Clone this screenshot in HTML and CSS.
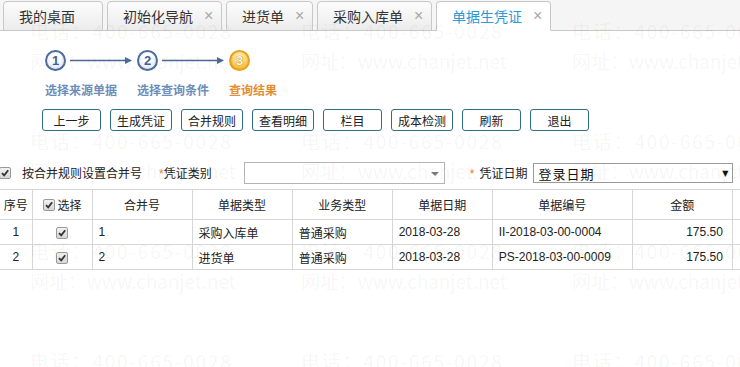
FILE: index.html
```html
<!DOCTYPE html>
<html lang="zh-CN">
<head>
<meta charset="utf-8">
<title>单据生凭证</title>
<link rel="stylesheet" href="styles.css">
</head>
<body>
<div class="page">
  <div class="tabbar">
    <div class="tab tab-home"><span class="tab-label">我的桌面</span></div>
    <div class="tab"><span class="tab-label">初始化导航</span><span class="tab-close">×</span></div>
    <div class="tab"><span class="tab-label">进货单</span><span class="tab-close">×</span></div>
    <div class="tab"><span class="tab-label">采购入库单</span><span class="tab-close">×</span></div>
    <div class="tab active"><span class="tab-label">单据生凭证</span><span class="tab-close">×</span></div>
  </div>

  <div class="steps">
    <div class="step-row">
      <div class="step">
        <span class="circle">1</span>
        <svg class="arrow" width="62" height="9" viewBox="0 0 62 9"><line x1="0" y1="4.5" x2="56" y2="4.5" stroke="#4c6a99" stroke-width="1.3"/><polygon points="55,1 62,4.5 55,8" fill="#4c6a99"/></svg>
      </div>
      <div class="step">
        <span class="circle">2</span>
        <svg class="arrow" width="62" height="9" viewBox="0 0 62 9"><line x1="0" y1="4.5" x2="56" y2="4.5" stroke="#4c6a99" stroke-width="1.3"/><polygon points="55,1 62,4.5 55,8" fill="#4c6a99"/></svg>
      </div>
      <div class="step">
        <span class="circle current">3</span>
      </div>
    </div>
    <div class="step-labels">
      <span class="step-label">选择来源单据</span>
      <span class="step-label">选择查询条件</span>
      <span class="step-label current">查询结果</span>
    </div>
  </div>

  <div class="toolbar">
    <button class="btn">上一步</button>
    <button class="btn btn-wide">生成凭证</button>
    <button class="btn btn-wide">合并规则</button>
    <button class="btn btn-wide">查看明细</button>
    <button class="btn">栏目</button>
    <button class="btn btn-wide">成本检测</button>
    <button class="btn">刷新</button>
    <button class="btn">退出</button>
  </div>

  <div class="filter">
    <span class="chk chk-edge"><svg viewBox="0 0 10 10" width="10" height="10"><path d="M2 5.2 L4.2 7.4 L8.2 2.2" fill="none" stroke="#333" stroke-width="1.8"/></svg></span>
    <span class="filter-text merge-label">按合并规则设置合并号</span>
    <span class="filter-text type-label"><span class="req">*</span>凭证类别</span>
    <span class="select select-type"><span class="select-caret"></span></span>
    <span class="filter-text date-label"><span class="req req-gap">*</span>凭证日期</span>
    <span class="select select-date"><span class="select-value">登录日期</span><span class="select-arrow">▼</span></span>
  </div>

  <table class="grid">
    <colgroup>
      <col class="c-no"><col class="c-sel"><col class="c-w100"><col class="c-w100"><col class="c-w100"><col class="c-w100"><col class="c-w140"><col class="c-w100"><col class="c-w100">
    </colgroup>
    <thead>
      <tr>
        <th>序号</th>
        <th><span class="th-sel"><span class="chk"><svg viewBox="0 0 10 10" width="10" height="10"><path d="M2 5.2 L4.2 7.4 L8.2 2.2" fill="none" stroke="#333" stroke-width="1.8"/></svg></span>选择</span></th>
        <th>合并号</th>
        <th>单据类型</th>
        <th>业务类型</th>
        <th>单据日期</th>
        <th>单据编号</th>
        <th>金额</th>
        <th></th>
      </tr>
    </thead>
    <tbody>
      <tr>
        <td class="center">1</td>
        <td class="center"><span class="chk"><svg viewBox="0 0 10 10" width="10" height="10"><path d="M2 5.2 L4.2 7.4 L8.2 2.2" fill="none" stroke="#333" stroke-width="1.8"/></svg></span></td>
        <td>1</td>
        <td>采购入库单</td>
        <td>普通采购</td>
        <td>2018-03-28</td>
        <td>II-2018-03-00-0004</td>
        <td class="num">175.50</td>
        <td></td>
      </tr>
      <tr>
        <td class="center">2</td>
        <td class="center"><span class="chk"><svg viewBox="0 0 10 10" width="10" height="10"><path d="M2 5.2 L4.2 7.4 L8.2 2.2" fill="none" stroke="#333" stroke-width="1.8"/></svg></span></td>
        <td>2</td>
        <td>进货单</td>
        <td>普通采购</td>
        <td>2018-03-28</td>
        <td>PS-2018-03-00-0009</td>
        <td class="num">175.50</td>
        <td></td>
      </tr>
    </tbody>
  </table>

  <div class="watermark" aria-hidden="true">
    <div class="wm"><span>电话：400-665-0028</span><span class="web">网址：www.chanjet.net</span></div>
    <div class="wm"><span>电话：400-665-0028</span><span class="web">网址：www.chanjet.net</span></div>
    <div class="wm"><span>电话：400-665-0028</span><span class="web">网址：www.chanjet.net</span></div>
    <div class="wm"><span>电话：400-665-0028</span><span class="web">网址：www.chanjet.net</span></div>
    <div class="wm"><span>电话：400-665-0028</span><span class="web">网址：www.chanjet.net</span></div>
    <div class="wm"><span>电话：400-665-0028</span><span class="web">网址：www.chanjet.net</span></div>
    <div class="wm"><span>电话：400-665-0028</span><span class="web">网址：www.chanjet.net</span></div>
    <div class="wm"><span>电话：400-665-0028</span><span class="web">网址：www.chanjet.net</span></div>
    <div class="wm"><span>电话：400-665-0028</span><span class="web">网址：www.chanjet.net</span></div>
    <div class="wm"><span>电话：400-665-0028</span><span class="web">网址：www.chanjet.net</span></div>
    <div class="wm"><span>电话：400-665-0028</span><span class="web">网址：www.chanjet.net</span></div>
    <div class="wm"><span>电话：400-665-0028</span><span class="web">网址：www.chanjet.net</span></div>
  </div>
</div>
</body>
</html>
```

FILE: styles.css
```css
html, body {
  margin: 0;
  padding: 0;
  background: #fff;
}

body {
  font-family: "Liberation Sans", "Noto Sans CJK SC", sans-serif;
  font-size: 12px;
  color: #222;
  overflow: hidden;
}

.page {
  position: relative;
  width: 740px;
  height: 367px;
  overflow: hidden;
}

/* ---------- tabs ---------- */
.tabbar {
  display: flex;
  align-items: flex-end;
  gap: 4px;
  height: 30px;
  padding-left: 3px;
  background: #f5f5f5;
  border-bottom: 1px solid #c8c8c8;
}

.tab {
  display: flex;
  align-items: center;
  box-sizing: border-box;
  height: 30px;
  margin-bottom: -1px;
  padding: 0 8px 0 15px;
  border: 1px solid #c8c8c8;
  border-radius: 4px 4px 0 0;
  background: linear-gradient(#fcfcfc, #ececec);
  font-family: "Noto Sans CJK SC", sans-serif;
  font-size: 14px;
  color: #333;
}

.tab-home {
  min-width: 100px;
}

.tab-label {
  line-height: 18px;
}

.tab-close {
  margin-left: 11px;
  width: 9px;
  font-family: "Liberation Sans", sans-serif;
  font-size: 16px;
  color: #a8a8a8;
  line-height: 16px;
}

.tab.active {
  background: #fff;
  border-bottom-color: #fff;
}

.tab.active .tab-label {
  color: #2a9ad5;
}

/* ---------- steps ---------- */
.steps {
  padding: 19px 0 0 45px;
}

.step-row {
  display: flex;
}

.step {
  display: flex;
  align-items: center;
  width: 92px;
}

.circle {
  display: flex;
  align-items: center;
  justify-content: center;
  box-sizing: border-box;
  width: 21px;
  height: 21px;
  border: 2px solid #4e6c9c;
  border-radius: 50%;
  background: radial-gradient(circle at 50% 35%, #ffffff 30%, #d4def0);
  font-family: "Liberation Sans", sans-serif;
  font-size: 13px;
  font-weight: bold;
  color: #41629a;
}

.circle.current {
  border-color: #eaa21c;
  background: radial-gradient(circle at 50% 30%, #fff0b8 10%, #f7b62c 85%);
  color: #fff8e0;
  text-shadow: 0 0 1px #c47800, 0 0 1px #c47800;
}

.arrow {
  display: block;
  margin-left: 4px;
}

.step-labels {
  display: flex;
  margin-top: 11px;
}

.step-label {
  width: 92px;
  font-family: "Noto Sans CJK SC", sans-serif;
  font-size: 12px;
  font-weight: bold;
  line-height: 16px;
  color: #6c8db9;
}

.step-label.current {
  color: #e38e35;
}

/* ---------- toolbar ---------- */
.toolbar {
  display: flex;
  gap: 9px;
  margin-top: 11px;
  padding-left: 42px;
}

.btn {
  display: flex;
  align-items: center;
  justify-content: center;
  box-sizing: border-box;
  width: 59px;
  height: 22px;
  padding: 0;
  border: 1px solid #2f6f86;
  border-radius: 3px;
  background: #fff;
  font-family: "Noto Sans CJK SC", sans-serif;
  font-size: 12px;
  color: #222;
}

.btn-wide {
  width: 62px;
}

/* ---------- filter row ---------- */
.filter {
  display: flex;
  align-items: center;
  height: 22px;
  margin-top: 31px;
  font-family: "Noto Sans CJK SC", sans-serif;
}

.chk {
  display: inline-flex;
  align-items: center;
  justify-content: center;
  box-sizing: border-box;
  width: 12px;
  height: 12px;
  border: 1px solid #9a9a9a;
  border-radius: 2px;
  background: linear-gradient(#f2f2f2, #d6d6d6);
  vertical-align: middle;
}

.chk-edge {
  margin-left: -1px;
}

.filter-text {
  font-size: 12px;
  line-height: 16px;
  color: #222;
  white-space: nowrap;
}

.merge-label {
  margin-left: 11px;
}

.type-label {
  margin-left: 17px;
}

.req {
  color: #e8812a;
  font-family: "Liberation Sans", sans-serif;
}

.req-gap {
  margin-right: 5px;
}

.select {
  position: relative;
  display: flex;
  align-items: center;
  box-sizing: border-box;
  background: #fff;
}

.select-type {
  width: 201px;
  height: 22px;
  margin-left: 32px;
  border: 1px solid #b4b4b4;
  justify-content: flex-end;
}

.select-caret {
  width: 0;
  height: 0;
  margin-right: 5px;
  margin-top: 2px;
  border-left: 4px solid transparent;
  border-right: 4px solid transparent;
  border-top: 4px solid #7a7a7a;
}

.date-label {
  margin-left: 25px;
}

.select-date {
  width: 200px;
  height: 20px;
  margin-left: 6px;
  border: 1px solid #9a9a9a;
  justify-content: space-between;
}

.select-value {
  padding-left: 4px;
  font-size: 13px;
  letter-spacing: 1px;
  color: #111;
}

.select-arrow {
  margin-right: 4px;
  font-family: "DejaVu Sans", sans-serif;
  font-size: 8px;
  color: #111;
}

/* ---------- table ---------- */
.grid {
  margin-top: 5px;
  width: 833px;
  table-layout: fixed;
  border-collapse: collapse;
  font-family: "Liberation Sans", "Noto Sans CJK SC", sans-serif;
  font-size: 12px;
  color: #222;
}

.c-no { width: 32px; }
.c-sel { width: 60px; }
.c-w100 { width: 100px; }
.c-w140 { width: 140px; }

.grid th,
.grid td {
  border: 1px solid #d6d6d6;
  padding: 0 6px;
  white-space: nowrap;
  overflow: hidden;
}

.grid th:first-child,
.grid td:first-child {
  border-left: none;
  padding: 0;
}

.grid th {
  height: 29px;
  font-weight: normal;
  text-align: center;
}

.grid td {
  height: 24px;
  text-align: left;
}

.grid td.center {
  text-align: center;
  padding: 0;
}

.grid td.num {
  text-align: right;
  padding-right: 9px;
}

.th-sel {
  display: inline-flex;
  align-items: center;
  gap: 3px;
}

/* ---------- watermark overlay ---------- */
.watermark {
  position: absolute;
  top: 0;
  left: 0;
  display: grid;
  grid-template-columns: repeat(3, 271px);
  grid-auto-rows: 110px;
  padding: 16px 0 0 30px;
  pointer-events: none;
  font-family: "Noto Sans CJK SC", sans-serif;
  font-size: 19px;
  color: rgba(0, 0, 0, 0.05);
  white-space: nowrap;
}

.wm {
  display: flex;
  flex-direction: column;
  line-height: 30px;
}

.wm span {
  letter-spacing: 1.8px;
}

.wm .web {
  letter-spacing: -0.1px;
}
```
